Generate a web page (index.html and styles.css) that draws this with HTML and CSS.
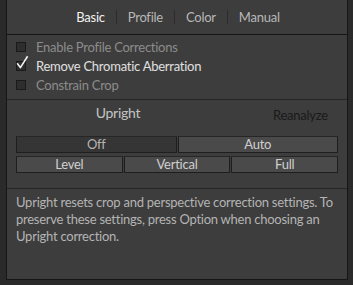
FILE: index.html
```html
<!DOCTYPE html>
<html lang="en">
<head>
  <meta charset="UTF-8">
  <title>Lens Corrections</title>
  <link rel="stylesheet" href="styles.css">
</head>
<body>

  <div class="panel">
    <div class="tabs">
      <span class="tab active">Basic</span>
      <span class="sep"></span>
      <span class="tab">Profile</span>
      <span class="sep"></span>
      <span class="tab">Color</span>
      <span class="sep"></span>
      <span class="tab">Manual</span>
    </div>

    <div class="options">
      <label class="option"><span class="box"></span>Enable Profile Corrections</label>
      <label class="option on">
        <span class="box">
          <svg class="check" width="13" height="15" viewBox="0 0 13 15">
            <path d="M1.2 8.2 L4.4 12.6 L11.6 1.2" fill="none" stroke="#f4f4f4" stroke-width="1.6" stroke-linejoin="round"/>
          </svg>
        </span>Remove Chromatic Aberration
      </label>
      <label class="option"><span class="box"></span>Constrain Crop</label>
    </div>

    <div class="upright">
      <div class="upright-head">
        <span class="upright-title">Upright</span>
        <span class="reanalyze">Reanalyze</span>
      </div>
      <div class="btn-row">
        <button class="seg pressed">Off</button>
        <button class="seg">Auto</button>
      </div>
      <div class="btn-row">
        <button class="seg">Level</button>
        <button class="seg">Vertical</button>
        <button class="seg">Full</button>
      </div>
    </div>

    <p class="note">Upright resets crop and perspective correction settings. To preserve these settings, press Option when choosing an Upright correction.</p>
  </div>

</body>
</html>
```

FILE: styles.css
```css
body {
  margin: 0;
  padding: 0;
  background-color: #2a2a2a;
  font-family: Lato, "Open Sans", sans-serif;
  font-size: 13px;
  letter-spacing: -0.25px;
}

.panel {
  width: 340px;
  height: 279px;
  margin-left: 6px;
  background-color: #3d3d3d;
  border: 1px solid #161616;
  border-top: none;
}

.tabs {
  display: flex;
  justify-content: center;
  align-items: center;
  height: 34px;
  border-bottom: 1px solid #151515;
  color: #b8b8b8;
  padding-left: 2px;
}

.tab {
  padding: 0 11px;
}

.tab.active {
  color: #f2f2f2;
}

.sep {
  width: 1px;
  height: 14px;
  background-color: #2c2c2c;
}

.options {
  padding: 2px 0 5px 9px;
  border-bottom: 1px solid #262626;
}

.option {
  display: flex;
  align-items: center;
  height: 19px;
  color: #8c8c8c;
}

.option.on {
  color: #e0e0e0;
}

.box {
  width: 8px;
  height: 8px;
  border: 1px solid #1a1a1a;
  background-color: #2e2e2e;
  margin-right: 10px;
  position: relative;
}

.check {
  position: absolute;
  left: -1px;
  top: -7px;
}

.upright {
  padding: 0 9px 15px 9px;
  border-bottom: 1px solid #262626;
}

.upright-head {
  display: flex;
  align-items: center;
  height: 24px;
  margin-bottom: 12px;
}

.upright-title {
  width: 204px;
  text-align: center;
  color: #c4c4c4;
  font-size: 14px;
}

.reanalyze {
  color: #1a1a1a;
  margin-left: 53px;
  padding-top: 5px;
}

.btn-row {
  display: flex;
  margin-bottom: 3px;
}

.btn-row:last-child {
  margin-bottom: 0;
}

.seg {
  flex: 1;
  height: 17px;
  padding: 0;
  margin-right: 1px;
  background-color: #4a4a4a;
  border: 1px solid #1e1e1e;
  border-top-color: #262626;
  color: #cfcfcf;
  font-family: inherit;
  font-size: 13px;
  letter-spacing: -0.25px;
  line-height: 15px;
}

.seg:last-child {
  margin-right: 0;
}

.seg.pressed {
  background-color: #353535;
  color: #b4b4b4;
}

.note {
  margin: 0;
  padding: 5px 8px 0 9px;
  color: #b4b4b4;
  line-height: 17px;
}
```
